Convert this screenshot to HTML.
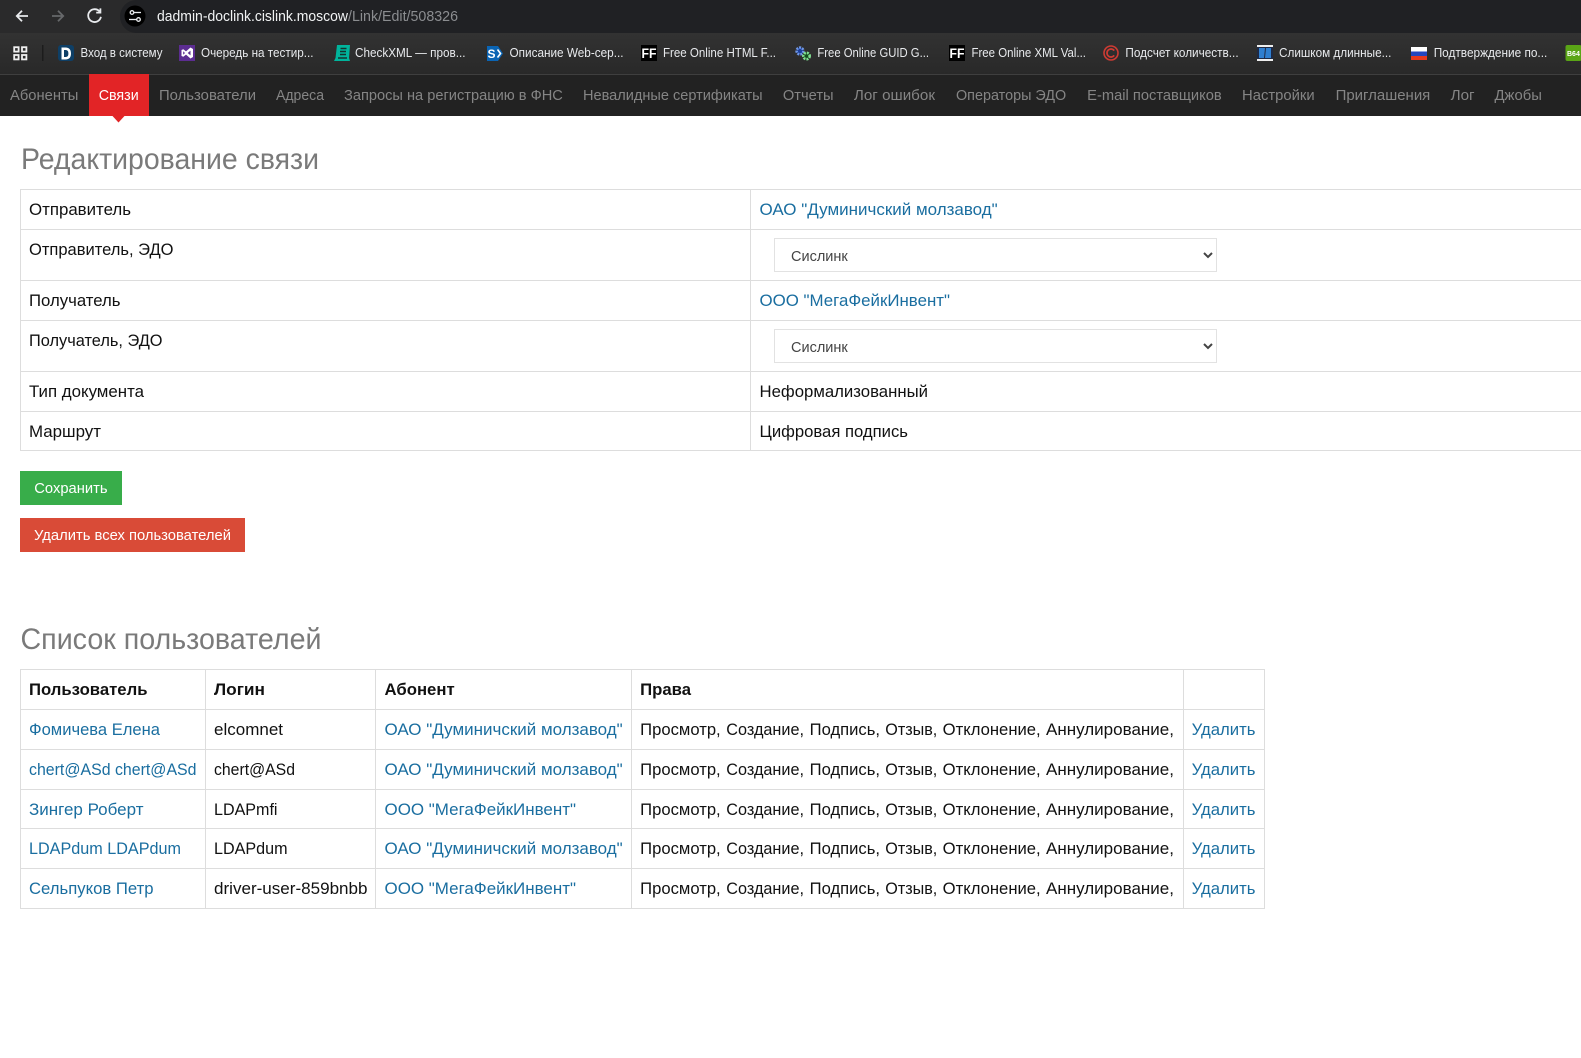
<!DOCTYPE html>
<html lang="ru"><head><meta charset="utf-8"><title>Редактирование связи</title>
<style>
html,body{margin:0;padding:0;width:1581px;height:1058px;overflow:hidden;background:#fff}
svg{position:absolute;left:0;top:0;display:block}
text{font-family:"Liberation Sans",sans-serif;font-size:16.5px;fill:#111;white-space:pre}
.l{fill:#1a6ea0}
.b{font-weight:bold}
.n{font-size:14.5px;fill:#858585}
.m{font-size:12.5px;fill:#e8eaed}
.h{font-size:30px;fill:#7a7a7a}
.w{font-size:14.5px;fill:#fff}
select{position:absolute;left:774px;width:443px;height:34px;box-sizing:border-box;border:1px solid #e2e2e2;border-radius:0;background:#fff;padding:4px 0 0 12px;font:14.5px "Liberation Sans",sans-serif;color:#444;outline:0}
</style></head><body>
<svg width="1581" height="1058" viewBox="0 0 1581 1058" xmlns="http://www.w3.org/2000/svg">
<defs><linearGradient id="bm" x1="0" y1="0" x2="0" y2="1"><stop offset="0" stop-color="#323232"/><stop offset="1" stop-color="#292929"/></linearGradient></defs>
<!-- browser toolbar -->
<rect x="0" y="0" width="1581" height="33" fill="#2a2a2b"/>
<path d="M136 0H1581V33H136A16.5 16.5 0 0 1 120 16.5A16.5 16.5 0 0 1 136 0Z" fill="#202124"/>
<rect x="0" y="33" width="1581" height="41" fill="url(#bm)"/>
<rect x="0" y="74" width="1581" height="1" fill="#3f3f3f"/>
<g fill="none" stroke="#e8eaed" stroke-width="1.8">
<path d="M28 16H17M22 10.8L16.8 16L22 21.2"/>
<path d="M52 16H63M58 10.8L63.2 16L58 21.2" stroke="#66686a"/>
<path d="M99.6 11.6A6.4 6.4 0 1 0 100.9 16.8"/><path d="M100.4 8.4V12.6H96.2"/>
</g>
<circle cx="135" cy="16" r="10.5" fill="#000"/>
<g fill="none" stroke="#e8eaed" stroke-width="1.3"><circle cx="132" cy="12.5" r="1.8"/><path d="M134 12.5H141"/><circle cx="138.5" cy="19.5" r="1.8"/><path d="M129 19.5H136.5"/></g>
<text x="157" y="21" class="w" textLength="191" lengthAdjust="spacingAndGlyphs" style="fill:#f1f3f4">dadmin-doclink.cislink.moscow</text>
<text x="348" y="21" class="w" textLength="110" lengthAdjust="spacingAndGlyphs" style="fill:#8b8d90">/Link/Edit/508326</text>
<!-- bookmarks -->
<g fill="none" stroke="#f0f0f0" stroke-width="1.8"><rect x="14.2" y="47.2" width="4.4" height="4.4"/><rect x="22" y="47.2" width="4.4" height="4.4"/><rect x="14.2" y="55" width="4.4" height="4.4"/><rect x="22" y="55" width="4.4" height="4.4"/></g>
<rect x="42" y="45" width="1.5" height="16" fill="#1c1c1c"/>
<rect x="58" y="45" width="16" height="16" rx="3" fill="#0e3f66"/>
<path d="M61.5 47.5H65.5C69.5 47.5 71 50 71 53.5S69.5 59.5 65.5 59.5H61.5ZM64 50V57H65.3C67.5 57 68.4 56 68.4 53.5S67.5 50 65.3 50Z" fill="#fff" fill-rule="evenodd"/>
<text x="80.5" y="57" class="m" textLength="82" lengthAdjust="spacingAndGlyphs">Вход в систему</text>
<rect x="179" y="45" width="16" height="16" fill="#5c2d91"/>
<path d="M190.5 47.5L193 49V57L190.5 58.5L186 54.6L183.3 56.8L181.5 56V50L183.3 49.2L186 51.4ZM183.2 51.2V54.8L185 53ZM190.5 50.6L187.7 53L190.5 55.4Z" fill="#fff" fill-rule="evenodd"/>
<text x="201" y="57" class="m" textLength="112.5" lengthAdjust="spacingAndGlyphs">Очередь на тестир...</text>
<path d="M337 45H350L349 58L350 61H334L335.5 58Z" fill="#00b49c"/>
<path d="M340.5 48.5H346.5M340 51.5H346M340 54.5H346M338 58H347" stroke="#15332e" stroke-width="1.4"/>
<text x="355" y="57" class="m" textLength="110.5" lengthAdjust="spacingAndGlyphs">CheckXML — пров...</text>
<path d="M487 46H498L503 53.5L498 61H487Z" fill="#0a64b4"/>
<path d="M497.5 49.5L500.5 53.5L497.5 57.5" fill="none" stroke="#fff" stroke-width="1.6"/>
<text x="491.5" y="58" style="font-size:12px;font-weight:bold;fill:#fff" text-anchor="middle">S</text>
<text x="509.5" y="57" class="m" textLength="114" lengthAdjust="spacingAndGlyphs">Описание Web-сер...</text>
<rect x="641" y="45" width="16" height="16" fill="#000"/>
<text x="641.5" y="58" style="font-size:13.5px;font-weight:bold;fill:#fff" textLength="15" lengthAdjust="spacingAndGlyphs">FF</text>
<text x="663" y="57" class="m" textLength="113" lengthAdjust="spacingAndGlyphs">Free Online HTML F...</text>
<circle cx="800" cy="51" r="3.4" fill="#1b3f9c" stroke="#6f97e6" stroke-width="2.6" stroke-dasharray="2 1"/>
<circle cx="806.5" cy="56" r="3.2" fill="#14501e" stroke="#80e090" stroke-width="2.6" stroke-dasharray="2 1"/>
<text x="817.4" y="57" class="m" textLength="111.6" lengthAdjust="spacingAndGlyphs">Free Online GUID G...</text>
<rect x="949" y="45" width="16" height="16" fill="#000"/>
<text x="949.5" y="58" style="font-size:13.5px;font-weight:bold;fill:#fff" textLength="15" lengthAdjust="spacingAndGlyphs">FF</text>
<text x="971.5" y="57" class="m" textLength="114.5" lengthAdjust="spacingAndGlyphs">Free Online XML Val...</text>
<circle cx="1111" cy="53" r="7" fill="none" stroke="#cf3b33" stroke-width="1.6"/>
<path d="M1114.2 50.6A4 4 0 1 0 1114.2 55.4" fill="none" stroke="#cf3b33" stroke-width="1.7"/>
<text x="1125.4" y="57" class="m" textLength="113.2" lengthAdjust="spacingAndGlyphs">Подсчет количеств...</text>
<rect x="1257" y="45" width="16" height="16" fill="#eee"/><rect x="1257" y="47" width="16" height="12" fill="#1f2a44"/><path d="M1259 48H1265L1264 58H1259ZM1266 48H1271V58H1265Z" fill="#2f7fd0"/>
<text x="1279" y="57" class="m" textLength="112.4" lengthAdjust="spacingAndGlyphs">Слишком длинные...</text>
<rect x="1411" y="47" width="16" height="4.5" fill="#fff"/><rect x="1411" y="51.5" width="16" height="4.5" fill="#2346c0"/><rect x="1411" y="56" width="16" height="4" fill="#e6391e"/>
<text x="1433.7" y="57" class="m" textLength="113.6" lengthAdjust="spacingAndGlyphs">Подтверждение по...</text>
<rect x="1565.5" y="45" width="16" height="16" rx="2" fill="#5aa516"/>
<text x="1567" y="56" style="font-size:7px;font-weight:bold;fill:#fff">B64</text>
<!-- nav -->
<rect x="0" y="75" width="1581" height="41" fill="#222"/>
<rect x="89" y="74" width="60" height="42" fill="#e22426"/>
<path d="M112.5 116H124.5L118.5 122.5Z" fill="#e22426"/>
<text x="10" y="100" class="n" textLength="68.4" lengthAdjust="spacingAndGlyphs">Абоненты</text>
<text x="98.7" y="100" class="n" style="fill:#fff" textLength="40" lengthAdjust="spacingAndGlyphs">Связи</text>
<text x="159" y="100" class="n" textLength="97" lengthAdjust="spacingAndGlyphs">Пользователи</text>
<text x="276" y="100" class="n" textLength="48" lengthAdjust="spacingAndGlyphs">Адреса</text>
<text x="344" y="100" class="n" textLength="218.8" lengthAdjust="spacingAndGlyphs">Запросы на регистрацию в ФНС</text>
<text x="583" y="100" class="n" textLength="179.6" lengthAdjust="spacingAndGlyphs">Невалидные сертификаты</text>
<text x="782.9" y="100" class="n" textLength="50.7" lengthAdjust="spacingAndGlyphs">Отчеты</text>
<text x="853.9" y="100" class="n" textLength="81.1" lengthAdjust="spacingAndGlyphs">Лог ошибок</text>
<text x="956" y="100" class="n" textLength="110.2" lengthAdjust="spacingAndGlyphs">Операторы ЭДО</text>
<text x="1087.2" y="100" class="n" textLength="134.5" lengthAdjust="spacingAndGlyphs">E-mail поставщиков</text>
<text x="1242" y="100" class="n" textLength="72.7" lengthAdjust="spacingAndGlyphs">Настройки</text>
<text x="1335.6" y="100" class="n" textLength="94.7" lengthAdjust="spacingAndGlyphs">Приглашения</text>
<text x="1450.6" y="100" class="n" textLength="24" lengthAdjust="spacingAndGlyphs">Лог</text>
<text x="1494.5" y="100" class="n" textLength="47.4" lengthAdjust="spacingAndGlyphs">Джобы</text>
<!-- edit section -->
<text x="21" y="169" class="h" textLength="298" lengthAdjust="spacingAndGlyphs">Редактирование связи</text>
<path d="M20.5 189V451M750.5 189V451M20 189.5H1581M20 229.5H1581M20 280.5H1581M20 320.5H1581M20 371.5H1581M20 411.5H1581M20 450.5H1581" stroke="#dddddd" stroke-width="1" fill="none"/>
<text x="29" y="215" textLength="102" lengthAdjust="spacingAndGlyphs">Отправитель</text>
<text x="759.5" y="215" class="l" textLength="238.2" lengthAdjust="spacingAndGlyphs">ОАО "Думиничский молзавод"</text>
<text x="29" y="255" textLength="144.5" lengthAdjust="spacingAndGlyphs">Отправитель, ЭДО</text>
<text x="29" y="306" textLength="91.5" lengthAdjust="spacingAndGlyphs">Получатель</text>
<text x="759.5" y="306" class="l" textLength="190.5" lengthAdjust="spacingAndGlyphs">ООО "МегаФейкИнвент"</text>
<text x="29" y="346" textLength="133.5" lengthAdjust="spacingAndGlyphs">Получатель, ЭДО</text>
<text x="29" y="397" textLength="115" lengthAdjust="spacingAndGlyphs">Тип документа</text>
<text x="759.5" y="397" textLength="168.5" lengthAdjust="spacingAndGlyphs">Неформализованный</text>
<text x="29" y="437" textLength="72" lengthAdjust="spacingAndGlyphs">Маршрут</text>
<text x="759.5" y="437" textLength="148.5" lengthAdjust="spacingAndGlyphs">Цифровая подпись</text>
<!-- buttons -->
<rect x="20" y="471" width="102" height="34" fill="#38ad4a"/>
<text x="34.3" y="493" class="w" textLength="73.2" lengthAdjust="spacingAndGlyphs">Сохранить</text>
<rect x="20" y="518" width="225" height="34" fill="#d94b37"/>
<text x="34" y="540" class="w" textLength="197" lengthAdjust="spacingAndGlyphs">Удалить всех пользователей</text>
<!-- users -->
<text x="20.5" y="649" class="h" textLength="301" lengthAdjust="spacingAndGlyphs">Список пользователей</text>
<path d="M20.5 669V909M205.5 669V909M375.5 669V909M631.5 669V909M1183.5 669V909M1264.5 669V909M20 669.5H1265M20 709.5H1265M20 749.5H1265M20 789.5H1265M20 828.5H1265M20 868.5H1265M20 908.5H1265" stroke="#dddddd" stroke-width="1" fill="none"/>
<text x="29" y="695" class="b" textLength="118.5" lengthAdjust="spacingAndGlyphs">Пользователь</text>
<text x="214" y="695" class="b" textLength="51" lengthAdjust="spacingAndGlyphs">Логин</text>
<text x="384.5" y="695" class="b" textLength="70.2" lengthAdjust="spacingAndGlyphs">Абонент</text>
<text x="640.2" y="695" class="b" textLength="50.8" lengthAdjust="spacingAndGlyphs">Права</text>

<text x="29" y="735" class="l" textLength="131" lengthAdjust="spacingAndGlyphs">Фомичева Елена</text>
<text x="214" y="735" textLength="69" lengthAdjust="spacingAndGlyphs">elcomnet</text>
<text x="384.5" y="735" class="l" textLength="238.2" lengthAdjust="spacingAndGlyphs">ОАО "Думиничский молзавод"</text>
<text x="640.2" y="735" textLength="80.5" lengthAdjust="spacingAndGlyphs">Просмотр,</text>
<text x="726.3" y="735" textLength="77.7" lengthAdjust="spacingAndGlyphs">Создание,</text>
<text x="809.7" y="735" textLength="70.3" lengthAdjust="spacingAndGlyphs">Подпись,</text>
<text x="885.3" y="735" textLength="52" lengthAdjust="spacingAndGlyphs">Отзыв,</text>
<text x="942.7" y="735" textLength="98" lengthAdjust="spacingAndGlyphs">Отклонение,</text>
<text x="1046" y="735" textLength="128" lengthAdjust="spacingAndGlyphs">Аннулирование,</text>
<text x="1191.7" y="735" class="l" textLength="63.8" lengthAdjust="spacingAndGlyphs">Удалить</text>

<text x="29" y="775" class="l" textLength="167.5" lengthAdjust="spacingAndGlyphs">chert@ASd chert@ASd</text>
<text x="214" y="775" textLength="81" lengthAdjust="spacingAndGlyphs">chert@ASd</text>
<text x="384.5" y="775" class="l" textLength="238.2" lengthAdjust="spacingAndGlyphs">ОАО "Думиничский молзавод"</text>
<text x="640.2" y="775" textLength="80.5" lengthAdjust="spacingAndGlyphs">Просмотр,</text>
<text x="726.3" y="775" textLength="77.7" lengthAdjust="spacingAndGlyphs">Создание,</text>
<text x="809.7" y="775" textLength="70.3" lengthAdjust="spacingAndGlyphs">Подпись,</text>
<text x="885.3" y="775" textLength="52" lengthAdjust="spacingAndGlyphs">Отзыв,</text>
<text x="942.7" y="775" textLength="98" lengthAdjust="spacingAndGlyphs">Отклонение,</text>
<text x="1046" y="775" textLength="128" lengthAdjust="spacingAndGlyphs">Аннулирование,</text>
<text x="1191.7" y="775" class="l" textLength="63.8" lengthAdjust="spacingAndGlyphs">Удалить</text>

<text x="29" y="815" class="l" textLength="114.5" lengthAdjust="spacingAndGlyphs">Зингер Роберт</text>
<text x="214" y="815" textLength="63.5" lengthAdjust="spacingAndGlyphs">LDAPmfi</text>
<text x="384.5" y="815" class="l" textLength="191.5" lengthAdjust="spacingAndGlyphs">ООО "МегаФейкИнвент"</text>
<text x="640.2" y="815" textLength="80.5" lengthAdjust="spacingAndGlyphs">Просмотр,</text>
<text x="726.3" y="815" textLength="77.7" lengthAdjust="spacingAndGlyphs">Создание,</text>
<text x="809.7" y="815" textLength="70.3" lengthAdjust="spacingAndGlyphs">Подпись,</text>
<text x="885.3" y="815" textLength="52" lengthAdjust="spacingAndGlyphs">Отзыв,</text>
<text x="942.7" y="815" textLength="98" lengthAdjust="spacingAndGlyphs">Отклонение,</text>
<text x="1046" y="815" textLength="128" lengthAdjust="spacingAndGlyphs">Аннулирование,</text>
<text x="1191.7" y="815" class="l" textLength="63.8" lengthAdjust="spacingAndGlyphs">Удалить</text>

<text x="29" y="854" class="l" textLength="152" lengthAdjust="spacingAndGlyphs">LDAPdum LDAPdum</text>
<text x="214" y="854" textLength="73.5" lengthAdjust="spacingAndGlyphs">LDAPdum</text>
<text x="384.5" y="854" class="l" textLength="238.2" lengthAdjust="spacingAndGlyphs">ОАО "Думиничский молзавод"</text>
<text x="640.2" y="854" textLength="80.5" lengthAdjust="spacingAndGlyphs">Просмотр,</text>
<text x="726.3" y="854" textLength="77.7" lengthAdjust="spacingAndGlyphs">Создание,</text>
<text x="809.7" y="854" textLength="70.3" lengthAdjust="spacingAndGlyphs">Подпись,</text>
<text x="885.3" y="854" textLength="52" lengthAdjust="spacingAndGlyphs">Отзыв,</text>
<text x="942.7" y="854" textLength="98" lengthAdjust="spacingAndGlyphs">Отклонение,</text>
<text x="1046" y="854" textLength="128" lengthAdjust="spacingAndGlyphs">Аннулирование,</text>
<text x="1191.7" y="854" class="l" textLength="63.8" lengthAdjust="spacingAndGlyphs">Удалить</text>

<text x="29" y="894" class="l" textLength="124.5" lengthAdjust="spacingAndGlyphs">Сельпуков Петр</text>
<text x="214" y="894" textLength="153.5" lengthAdjust="spacingAndGlyphs">driver-user-859bnbb</text>
<text x="384.5" y="894" class="l" textLength="191.5" lengthAdjust="spacingAndGlyphs">ООО "МегаФейкИнвент"</text>
<text x="640.2" y="894" textLength="80.5" lengthAdjust="spacingAndGlyphs">Просмотр,</text>
<text x="726.3" y="894" textLength="77.7" lengthAdjust="spacingAndGlyphs">Создание,</text>
<text x="809.7" y="894" textLength="70.3" lengthAdjust="spacingAndGlyphs">Подпись,</text>
<text x="885.3" y="894" textLength="52" lengthAdjust="spacingAndGlyphs">Отзыв,</text>
<text x="942.7" y="894" textLength="98" lengthAdjust="spacingAndGlyphs">Отклонение,</text>
<text x="1046" y="894" textLength="128" lengthAdjust="spacingAndGlyphs">Аннулирование,</text>
<text x="1191.7" y="894" class="l" textLength="63.8" lengthAdjust="spacingAndGlyphs">Удалить</text>
</svg>
<select style="top:238px"><option>Сислинк</option></select>
<select style="top:329px"><option>Сислинк</option></select>
</body></html>
